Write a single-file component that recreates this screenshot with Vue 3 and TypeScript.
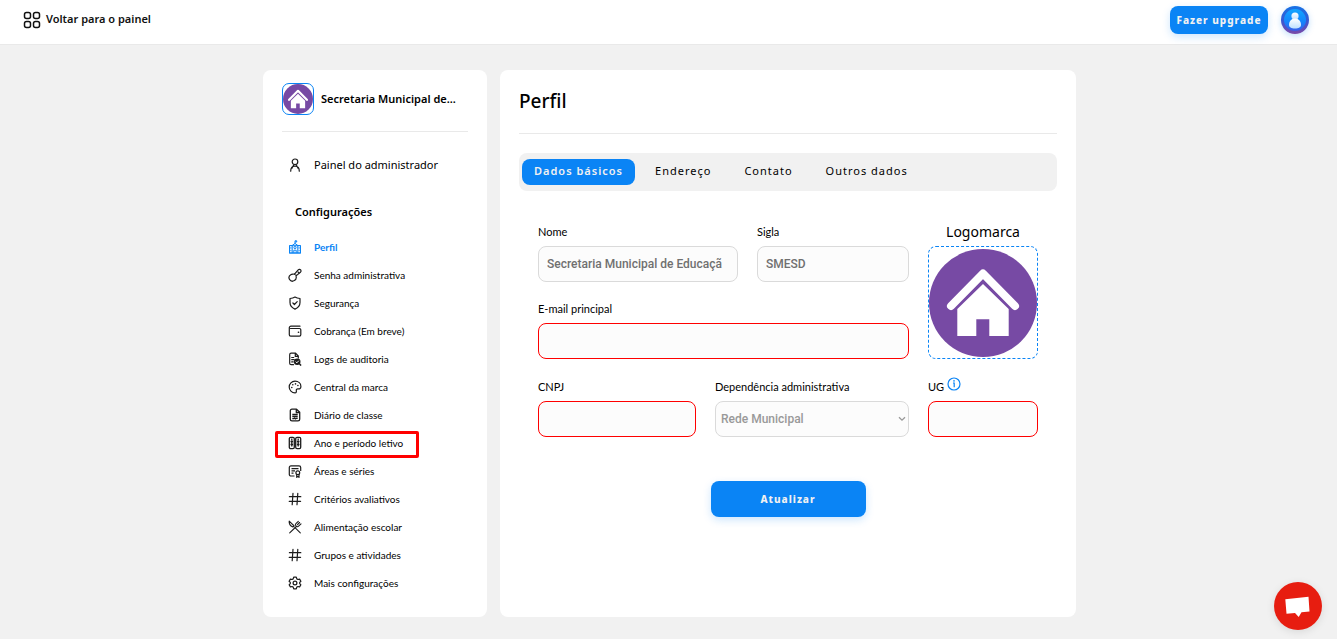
<script setup lang="ts">
import { ref } from 'vue'

interface MenuItem {
  label: string
  icon: string
  marked?: boolean
}

const menu: MenuItem[] = [
  { label: 'Perfil', icon: 'school' },
  { label: 'Senha administrativa', icon: 'key' },
  { label: 'Segurança', icon: 'shield' },
  { label: 'Cobrança (Em breve)', icon: 'wallet' },
  { label: 'Logs de auditoria', icon: 'audit' },
  { label: 'Central da marca', icon: 'palette' },
  { label: 'Diário de classe', icon: 'document' },
  { label: 'Ano e período letivo', icon: 'columns', marked: true },
  { label: 'Áreas e séries', icon: 'certificate' },
  { label: 'Critérios avaliativos', icon: 'hash' },
  { label: 'Alimentação escolar', icon: 'food' },
  { label: 'Grupos e atividades', icon: 'hash' },
  { label: 'Mais configurações', icon: 'gear' },
]

const tabs = ['Dados básicos', 'Endereço', 'Contato', 'Outros dados']
const activeItem = ref('Perfil')
const activeTab = ref('Dados básicos')

const nome = ref('Secretaria Municipal de Educaçã')
const sigla = ref('SMESD')
const email = ref('')
const cnpj = ref('')
const ug = ref('')
const dependencia = ref('Rede Municipal')
</script>

<template>
  <div class="page">
    <header class="topbar">
      <a href="#" class="back">
        <svg class="back-icon" viewBox="0 0 18 18" aria-hidden="true">
          <g fill="none" stroke="currentColor" stroke-width="1.5">
            <rect x="1.5" y="1.5" width="6" height="6" rx="2" />
            <rect x="10.5" y="1.5" width="6" height="6" rx="2" />
            <rect x="1.5" y="10.5" width="6" height="6" rx="2" />
            <rect x="10.5" y="10.5" width="6" height="6" rx="2" />
          </g>
        </svg>
        <span class="lead">Voltar para o painel</span>
      </a>
      <div class="top-actions">
        <button type="button" class="primary upgrade">Fazer upgrade</button>
        <button type="button" class="avatar" aria-label="Conta">
          <svg viewBox="0 0 28 28" aria-hidden="true">
            <defs>
              <linearGradient id="ring" x1="0" y1="0" x2="0" y2="1">
                <stop offset="0" stop-color="#1673e6" />
                <stop offset="0.55" stop-color="#3a56d0" />
                <stop offset="1" stop-color="#7a4aa8" />
              </linearGradient>
              <linearGradient id="disc" x1="0" y1="0" x2="0" y2="1">
                <stop offset="0" stop-color="#12a5ff" />
                <stop offset="0.6" stop-color="#1483fb" />
                <stop offset="1" stop-color="#3c5be6" />
              </linearGradient>
              <linearGradient id="person" x1="0" y1="0" x2="0" y2="1">
                <stop offset="0" stop-color="#ffffff" />
                <stop offset="1" stop-color="#bfe0ff" />
              </linearGradient>
            </defs>
            <circle cx="14" cy="14" r="14" fill="url(#ring)" />
            <circle cx="14" cy="14" r="11" fill="url(#disc)" />
            <circle cx="14" cy="10" r="3.6" fill="url(#person)" />
            <path d="M14 12.5c4 0 6 3.2 6 6.3 0 2.6-2.2 3.7-6 3.7s-6-1.1-6-3.7c0-3.1 2-6.3 6-6.3z" fill="url(#person)" />
          </svg>
        </button>
      </div>
    </header>

    <main class="layout">
      <aside class="card sidebar">
        <div class="org">
          <svg class="org-logo" viewBox="0 0 108 108" aria-hidden="true">
            <circle cx="54" cy="54" r="54" fill="#774aa4" />
            <path d="M22 57 54 24.5 86 57" fill="none" stroke="#fff" stroke-width="8" stroke-linecap="round" stroke-linejoin="round" />
            <path d="M54 35 28.3 60v27h19V70.3h13V87h19.4V60z" fill="#fff" />
          </svg>
          <strong class="org-name lead">Secretaria Municipal de...</strong>
        </div>

        <a href="#" class="admin">
          <svg class="icon" viewBox="0 0 14 14" aria-hidden="true">
            <g fill="none" stroke="currentColor" stroke-width="1.2" stroke-linecap="round">
              <circle cx="7" cy="3.8" r="2.8" />
              <path d="M2.7 13.2c0-3.200 1.300-5 4.300-5s4.300 1.800 4.300 5M4 10.200l1.400-2.700M10 10.200 8.600 7.500" />
            </g>
          </svg>
          <span class="lead">Painel do administrador</span>
        </a>

        <h2 class="section">Configurações</h2>
        <ul class="menu">
          <li v-for="item in menu" :key="item.label" :class="{ marked: item.marked }">
            <a
              href="#"
              class="item"
              :class="{ active: item.label === activeItem }"
              @click.prevent="activeItem = item.label"
            >
              <svg class="icon" viewBox="0 0 14 14" aria-hidden="true">
                <g v-if="item.icon === 'school'" fill="none" stroke="currentColor" stroke-width="1">
                  <path d="M1.5 13V5.500h2.600L7 3.500l2.900 2h2.600V13zM4.200 5.500V13M9.800 5.500V13" />
                  <path d="M7 3.800V.8h1.700v1.200H7" />
                  <path d="M1 13h12M1.500 5.700h11M5.800 12.800v-2.600h2.400v2.600M2.900 7.200v1.500M2.900 9.800v1.500M11.100 7.200v1.500M11.100 9.800v1.500" />
                  <circle cx="7" cy="7.600" r="1.100" />
                </g>
                <g v-else-if="item.icon === 'key'" fill="none" stroke="currentColor" stroke-width="1.2" stroke-linejoin="round" stroke-linecap="round">
                  <path d="M6.500 6.200 10.200 1.900c.8-.9 2.300-.6 2.700.4.300.7.100 1.400-.5 1.900L8 7.900c.6 1.900-.1 3.800-1.700 4.700-1.700 1-3.800.4-4.800-1.200-.9-1.600-.4-3.600 1.200-4.600.6-.4 1.300-.6 2-.6" />
                  <path d="M6.500 6.200 5.500 6M10 4l1 .9M7.700 6.800l.6.600" />
                </g>
                <g v-else-if="item.icon === 'shield'" fill="none" stroke="currentColor" stroke-width="1.2" stroke-linejoin="round" stroke-linecap="round">
                  <path d="M7 1c1.500 1 3.200 1.400 5 1.500v4c0 3-2 5.300-5 6.600-3-1.300-5-3.600-5-6.600v-4C3.800 2.400 5.500 2 7 1z" />
                  <path d="m4.900 7 1.500 1.500L9.200 5.700" />
                </g>
                <g v-else-if="item.icon === 'wallet'" fill="none" stroke="currentColor" stroke-width="1.2" stroke-linejoin="round" stroke-linecap="round">
                  <path d="M12 2.200H3c-1 0-1.700.6-1.700 1.500v7c0 .9.500 1.400 1.400 1.400h8.700c.8 0 1.400-.5 1.400-1.400V5.800c0-.8-.6-1.300-1.400-1.300H2.500" />
                  <path d="M10.400 8.300h.2" stroke-width="1.500" />
                </g>
                <g v-else-if="item.icon === 'audit'">
                  <path d="M5.500 12.700H3.200c-.9 0-1.500-.6-1.500-1.500V2.700c0-.9.6-1.500 1.500-1.500h4.300l2.800 2.900v2M7.300 1.300v3h3M3.700 5.500h2M3.700 7.700h2.500M3.700 9.900h1.500" fill="none" stroke="currentColor" stroke-width="1.2" stroke-linecap="round" />
                  <circle cx="9.2" cy="9.700" r="3.300" fill="currentColor" />
                  <path d="m11.500 12 1.600 1.500" stroke="currentColor" stroke-width="1.5" />
                  <path d="m7.700 9.700 1.200 1.100 1.900-2.100" fill="none" stroke="#fff" stroke-width="1" />
                </g>
                <g v-else-if="item.icon === 'palette'">
                  <path d="M7 1.200c3.400 0 5.900 2.200 5.900 5.200 0 2-1.200 2.700-2.700 2.500-1.300-.2-2.100.4-1.900 1.600.2 1.300 0 2.300-1.300 2.300-3.200 0-5.800-2.600-5.800-5.800S3.800 1.200 7 1.200z" fill="none" stroke="currentColor" stroke-width="1.2" />
                  <g fill="currentColor">
                    <circle cx="3.800" cy="7.500" r=".8" /><circle cx="4.800" cy="4.800" r=".8" />
                    <circle cx="7.500" cy="3.900" r=".8" /><circle cx="9.900" cy="5.500" r=".8" />
                  </g>
                </g>
                <g v-else-if="item.icon === 'document'" fill="none" stroke="currentColor" stroke-width="1.3" stroke-linejoin="round">
                  <path d="M8.500 1.200H4c-1.100 0-1.700.6-1.700 1.600v8.400c0 1 .6 1.600 1.700 1.600h6c1 0 1.700-.6 1.700-1.600V4.300z" />
                  <path d="M8.300 1.300v3.200h3.300M4.300 6.500h5.400M4.300 8.500h5.400M4.300 10.700h1.500l.8-.6.9.8 1-.6h1.200" />
                </g>
                <g v-else-if="item.icon === 'columns'" fill="none" stroke="currentColor" stroke-width="1.3">
                  <rect x="1.300" y="1.300" width="5" height="11.400" rx="1.400" />
                  <rect x="7.700" y="1.300" width="5" height="11.400" rx="1.400" />
                  <path d="M3.800 2.500v2M10.200 2.500v2M2.500 5.500h2.600M8.900 5.500h2.600M2.500 8.500h2.600M8.900 8.500h2.600M3.800 5.500v5M10.200 5.500v5" />
                </g>
                <g v-else-if="item.icon === 'certificate'" fill="none" stroke="currentColor" stroke-width="1.2" stroke-linejoin="round">
                  <path d="M6.500 12H3c-1 0-1.700-.6-1.700-1.500V3.500c0-1 .6-1.600 1.700-1.600h8c1 0 1.700.6 1.700 1.600V7M3.500 4.600h7M3.500 6.900h3.500M3.500 9.200h2" />
                  <circle cx="9.800" cy="8.800" r="1.900" />
                  <path d="M8.700 10.300v3l1.100-.8 1.200.8v-3" />
                </g>
                <path v-else-if="item.icon === 'hash'" d="M5 1.300 4.200 12.700M9.800 1.300 9 12.700M1.400 4.700h11.400M1.200 9.300h11.400" fill="none" stroke="currentColor" stroke-width="1.2" stroke-linecap="round" />
                <g v-else-if="item.icon === 'food'" fill="none" stroke="currentColor" stroke-linecap="round" stroke-linejoin="round">
                  <path d="M1.200 1.200c-.3 2.500 1 4.600 3.700 5.800l1.300-1zM7 7.700l5.300 5.100" stroke-width="1.100" />
                  <path d="m1.700 12.800 6.600-6.300M10.300 1.300 7.900 3.700c-.8.900-.5 1.800.2 2.500.7.700 1.700.8 2.500 0l2.400-2.400M11.600 2.500 9.500 4.700" stroke-width="1.100" />
                </g>
                <g v-else fill="none" stroke="currentColor" stroke-width="1.2" stroke-linejoin="round">
                  <path d="M5.700 1.200h2.600l.5 1.700 1.100.6 1.700-.4 1.300 2.200L11.700 6.400v1.200l1.200 1.200-1.300 2.100-1.700-.4-1.100.6-.5 1.700H5.700l-.5-1.700-1.100-.6-1.700.4-1.300-2.100 1.200-1.200V6.400L1.100 5.300l1.300-2.200 1.700.4 1.100-.6z" />
                  <circle cx="7" cy="7" r="1.900" />
                </g>
              </svg>
              <span>{{ item.label }}</span>
            </a>
          </li>
        </ul>
      </aside>

      <section class="card content">
        <h1 class="title">Perfil</h1>
        <nav class="tabs">
          <button
            v-for="tab in tabs"
            :key="tab"
            type="button"
            class="tab"
            :class="{ selected: tab === activeTab }"
            @click="activeTab = tab"
          >{{ tab }}</button>
        </nav>

        <form class="form" @submit.prevent>
          <div class="fields">
            <div class="row names">
              <div class="field">
                <label for="nome">Nome</label>
                <input id="nome" v-model="nome" type="text" class="control" />
              </div>
              <div class="field">
                <label for="sigla">Sigla</label>
                <input id="sigla" v-model="sigla" type="text" class="control" />
              </div>
            </div>
            <div class="field">
              <label for="email">E-mail principal</label>
              <input id="email" v-model="email" type="email" class="control invalid" />
            </div>
          </div>

          <div class="brand">
            <span class="brand-title">Logomarca</span>
            <div class="brand-frame">
              <svg class="brand-logo" viewBox="0 0 108 108" role="img" aria-label="Logomarca">
                <circle cx="54" cy="54" r="54" fill="#774aa4" />
                <path d="M22 57 54 24.5 86 57" fill="none" stroke="#fff" stroke-width="8" stroke-linecap="round" stroke-linejoin="round" />
                <path d="M54 35 28.3 60v27h19V70.3h13V87h19.4V60z" fill="#fff" />
              </svg>
            </div>
          </div>

          <div class="row ids">
            <div class="field">
              <label for="cnpj">CNPJ</label>
              <input id="cnpj" v-model="cnpj" type="text" class="control invalid" />
            </div>
            <div class="field">
              <label for="dependencia">Dependência administrativa</label>
              <div class="select-wrap">
                <select id="dependencia" v-model="dependencia" class="control select" disabled>
                  <option>Rede Municipal</option>
                </select>
                <svg class="chevron" viewBox="0 0 8 6" aria-hidden="true">
                  <path d="m1 1.200 3 3 3-3" fill="none" stroke="#999" stroke-width="1.3" />
                </svg>
              </div>
            </div>
          </div>

          <div class="field">
            <label for="ug">
              UG
              <svg class="info" viewBox="0 0 14 14" aria-hidden="true">
                <circle cx="7" cy="7" r="6" fill="none" stroke="#0a84f5" stroke-width="1.2" />
                <path d="M6 6h1.200v4.300" fill="none" stroke="#0a84f5" stroke-width="1.2" />
                <circle cx="7" cy="3.900" r=".8" fill="#0a84f5" />
              </svg>
            </label>
            <input id="ug" v-model="ug" type="text" class="control invalid" />
          </div>

          <button type="submit" class="primary submit">Atualizar</button>
        </form>
      </section>
    </main>

    <button type="button" class="chat" aria-label="Abrir chat">
      <svg viewBox="0 0 48 48" aria-hidden="true">
        <path d="M11.300 17.300 34.500 14.700 35.500 29.500 27.500 30.300 24.700 35 21 31 12.500 31.800z" fill="#fff" />
      </svg>
    </button>
  </div>
</template>

<style>
body {
  margin: 0;
  background: #f1f1f1;
}
</style>

<style scoped>
.page {
  font-family: "Noto Sans", "Open Sans", sans-serif;
  color: #000;
  font-size: 11px;
}
.page *,
.page *::before,
.page *::after {
  box-sizing: border-box;
}
a {
  color: inherit;
  text-decoration: none;
}
button {
  font-family: inherit;
  border: 0;
  padding: 0;
  cursor: pointer;
}
svg {
  display: block;
  flex: none;
}
.topbar {
  display: flex;
  align-items: flex-start;
  justify-content: space-between;
  height: 45px;
  padding: 6px 28px 0 23px;
  background: #fff;
  border-bottom: 1px solid #e9e9e9;
}
.lead {
  padding-bottom: 2px;
}
.back {
  display: flex;
  align-items: center;
  gap: 5px;
  height: 28px;
  font-size: 11px;
  font-weight: 600;
  color: #111;
}
.back .lead {
  padding-bottom: 4px;
}
.back-icon {
  width: 18px;
  height: 18px;
}
.top-actions {
  display: flex;
  align-items: center;
  gap: 13px;
}
.primary {
  padding-bottom: 1px;
  background: #0a84f5;
  color: #f1f1f1;
  border-radius: 8px;
  font-size: 10px;
  font-weight: 800;
  letter-spacing: 1px;
  box-shadow: 0 3px 8px rgba(10, 132, 245, 0.2);
}
.upgrade {
  width: 98px;
  height: 28px;
  white-space: nowrap;
}
.avatar {
  width: 28px;
  height: 28px;
  border-radius: 50%;
  background: none;
  box-shadow: 0 2px 6px rgba(10, 132, 245, 0.25);
}
.layout {
  display: grid;
  grid-template-columns: 224px minmax(0, 1fr);
  gap: 13px;
  max-width: 855px;
  margin: 0 auto;
  padding: 25px 20px 22px 22px;
}
.card {
  background: #fff;
  border-radius: 8px;
}
.sidebar {
  padding: 13px 19px 20px;
}
.org {
  display: flex;
  align-items: center;
  gap: 7px;
  padding-bottom: 16px;
  border-bottom: 1px solid #e9e9e9;
}
.org-logo {
  width: 32px;
  height: 32px;
  border: 1px solid #0a84f5;
  border-radius: 7px;
}
.org-name {
  font-size: 11px;
  font-weight: 600;
  white-space: nowrap;
}
.admin,
.item {
  display: flex;
  align-items: center;
  gap: 12px;
  height: 28px;
  padding-left: 6px;
  white-space: nowrap;
}
.admin {
  margin-top: 19px;
  font-size: 11px;
}
.icon {
  width: 14px;
  height: 14px;
  color: #1c1c1c;
}
.section {
  margin: 23px 0 11px 13px;
  font-size: 11px;
  font-weight: 600;
  line-height: 20px;
}
.menu {
  list-style: none;
  margin: 0;
  padding: 0;
  font-family: Lato, sans-serif;
}
.item {
  font-size: 10px;
}
.item.active,
.item.active .icon {
  color: #0a84f5;
}
.item.active {
  font-weight: 700;
}
.marked {
  position: relative;
}
.marked::after {
  content: "";
  position: absolute;
  left: -7px;
  top: 2px;
  width: 144px;
  height: 27px;
  border: 3px solid #f00;
  border-radius: 2px;
  pointer-events: none;
}
.content {
  padding: 19px;
}
.title {
  margin: 0;
  padding-bottom: 20px;
  border-bottom: 1px solid #e9e9e9;
  font-size: 19px;
  font-weight: 500;
  line-height: 24px;
}
.tabs {
  display: flex;
  gap: 7px;
  margin-top: 19px;
  padding: 6px 3px;
  background: #f1f1f1;
  border-radius: 8px;
}
.tab {
  height: 26px;
  padding: 0 13px 3px;
  border-radius: 8px;
  background: none;
  color: #000;
  font-size: 11px;
  letter-spacing: 1px;
  white-space: nowrap;
}
.tab.selected {
  padding: 0 12px 3px;
  background: #0a84f5;
  color: #f1f1f1;
  font-weight: 600;
}
.form {
  display: grid;
  grid-template-columns: minmax(0, 1fr) 110px;
  gap: 18px 19px;
  margin-top: 31px;
  padding: 0 19px;
}
.fields {
  display: flex;
  flex-direction: column;
  gap: 17px;
}
.row {
  display: grid;
  gap: 19px;
}
.names {
  grid-template-columns: 200fr 152fr;
}
.ids {
  grid-template-columns: 158fr 194fr;
}
.field {
  display: flex;
  flex-direction: column;
  gap: 4px;
  min-width: 0;
}
label {
  display: flex;
  gap: 3px;
  font-family: Lato, sans-serif;
  font-size: 11px;
  line-height: 20px;
}
.info {
  width: 14px;
  height: 14px;
}
.control {
  width: 100%;
  height: 36px;
  padding: 0 8px;
  border: 1px solid #dadada;
  border-radius: 8px;
  background: #fcfcfc;
  color: #707070;
  font-family: Roboto, sans-serif;
  font-size: 12px;
  font-weight: 500;
  outline: 0;
}
.control.invalid {
  border-color: #f00;
}
.select-wrap {
  position: relative;
}
.select {
  appearance: none;
  padding: 0 16px 0 5px;
  color: #999;
  opacity: 1;
}
.chevron {
  position: absolute;
  right: 3px;
  top: 15px;
  width: 8px;
  height: 6px;
}
.brand {
  display: flex;
  flex-direction: column;
  gap: 5px;
}
.brand-title {
  font-size: 14px;
  line-height: 19px;
  text-align: center;
}
.brand-frame {
  flex: 1;
  display: grid;
  place-items: center;
  border: 1px dashed #0a84f5;
  border-radius: 8px;
}
.brand-logo {
  width: 100%;
}
.submit {
  grid-column: 1 / -1;
  justify-self: center;
  width: 155px;
  height: 36px;
  margin-top: 26px;
}
.chat {
  position: fixed;
  right: 15px;
  bottom: 9px;
  width: 48px;
  height: 48px;
  border-radius: 50%;
  background: #e71d10;
  box-shadow: 0 2px 8px rgba(0, 0, 0, 0.1);
}
</style>
